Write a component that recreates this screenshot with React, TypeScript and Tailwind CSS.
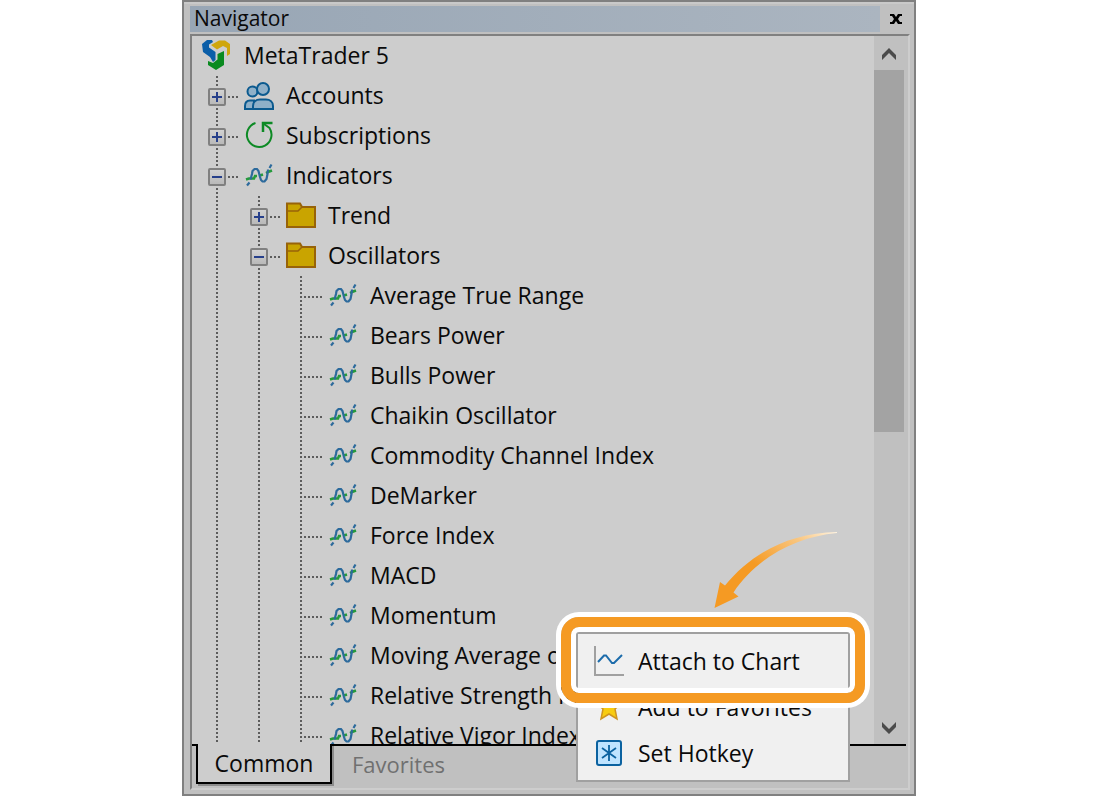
import React from "react";
import clsx from "clsx";

type IconName = "logo" | "accounts" | "subscriptions" | "indicator" | "folder";

interface TreeItem {
  label: string;
  icon: IconName;
  level: number;
  expanded?: boolean;
}

const oscillators = [
  "Average True Range",
  "Bears Power",
  "Bulls Power",
  "Chaikin Oscillator",
  "Commodity Channel Index",
  "DeMarker",
  "Force Index",
  "MACD",
  "Momentum",
  "Moving Average of Oscillator",
  "Relative Strength Index",
  "Relative Vigor Index",
];

const treeItems: TreeItem[] = [
  {label: "MetaTrader 5", icon: "logo", level: 0},
  {label: "Accounts", icon: "accounts", level: 1, expanded: false},
  {label: "Subscriptions", icon: "subscriptions", level: 1, expanded: false},
  {label: "Indicators", icon: "indicator", level: 1, expanded: true},
  {label: "Trend", icon: "folder", level: 2, expanded: false},
  {label: "Oscillators", icon: "folder", level: 2, expanded: true},
  ...oscillators.map((label): TreeItem => ({label, icon: "indicator", level: 3})),
];

function Icon({children}: {children: React.ReactNode}) {
  return (
    <svg width="30" height="32" viewBox="0 0 30 32" fill="none" className="shrink-0 overflow-visible" aria-hidden="true">
      {children}
    </svg>
  );
}

function LogoIcon() {
  return (
    <Icon>
      <path d="M0 4 5 0H10L11 2 7 4.500V7.500L13.500 12V20L11 22 8 17 1 12Z" fill="#0a5ea8"/>
      <path d="M9 5 17 0.500H23L28 4V14L25 16V8L21 6 15 9.500Z" fill="#cfa60c"/>
      <path d="M22 11V25L14 30 6 25V21L11 23 15.500 19.500V14Z" fill="#0a8a20"/>
    </Icon>
  );
}

function AccountsIcon() {
  return (
    <Icon>
      <g fill="#8fb0c8" stroke="#0b5a8f" strokeWidth="2">
        <path d="M1 29V26C1 22 3 20.500 6 20.500H10V29Z"/>
        <circle cx="8.500" cy="11.500" r="5"/>
        <path d="M9 29V26C9 22 12 19.500 16 19.500H22C26 19.500 29 22 29 26V29Z"/>
        <circle cx="19" cy="9" r="6"/>
      </g>
    </Icon>
  );
}

function SubscriptionsIcon() {
  return (
    <Icon>
      <path d="M11.500 3A12.300 12.300 0 1 0 25.500 8L20 4" stroke="#0d8a25" strokeWidth="2"/>
      <path d="M19 12V3H28.500" stroke="#0d8a25" strokeWidth="2.500"/>
    </Icon>
  );
}

function IndicatorIcon() {
  return (
    <Icon>
      <path d="M2 19.500 5 18.500H10L11 16H13M16 15.500 19 14.500M22 13 24 12 28 10.500" stroke="#259a3c" strokeWidth="2.500"/>
      <path d="M3 25.500 5.500 22.500M6.500 19.500 8 14 8.500 11 10.500 9H13L14.500 11 16 17 17 20 18.500 21.500H20.500L22.500 19 23.500 14 24 9.500M25.500 8 27.500 4.500" stroke="#2c6a9c" strokeWidth="2.200"/>
    </Icon>
  );
}

function FolderIcon() {
  return (
    <Icon>
      <path d="M1 3.500H14L16 7H29V27H1Z" fill="#c9a400" stroke="#986309" strokeWidth="2"/>
      <path d="M1 11H12L16 7" stroke="#986309" strokeWidth="1.500"/>
    </Icon>
  );
}

const icons: Record<IconName, React.FC> = {
  logo: LogoIcon,
  accounts: AccountsIcon,
  subscriptions: SubscriptionsIcon,
  indicator: IndicatorIcon,
  folder: FolderIcon,
};

function Expander({expanded, label}: {expanded: boolean, label: string}) {
  return (
    <button
      type="button"
      aria-label={`${expanded ? "Collapse" : "Expand"} ${label}`}
      className="col-start-1 row-start-1 flex size-[18px] items-center justify-center rounded-[2px] border-2 border-[#808080] bg-linear-to-b from-[#d2d2d2] to-[#b9b9b9]"
    >
      <svg width="10" height="10" viewBox="0 0 10 10" stroke="#27408b" strokeWidth="2" aria-hidden="true">
        <path d={expanded ? "M0 5H10" : "M0 5H10M5 0V10"}/>
      </svg>
    </button>
  );
}

function Guide({item, last}: {item: TreeItem, last: boolean}) {
  return (
    <div className="grid h-10 w-[42px] shrink-0 items-center justify-items-center bg-[repeating-linear-gradient(to_bottom,#5c5c5c_0_2px,transparent_2px_4px)] bg-[length:2px_100%] bg-center bg-no-repeat pt-0.5">
      {last && (
        <span
          className={clsx(
            "col-start-1 row-start-1 h-0.5 justify-self-end bg-[repeating-linear-gradient(to_right,#5c5c5c_0_2px,transparent_2px_4px)]",
            item.expanded === undefined ? "w-[18px]" : "w-[10px]"
          )}
        />
      )}
      {last && item.expanded !== undefined && <Expander expanded={item.expanded} label={item.label}/>}
    </div>
  );
}

function TreeRow({item}: {item: TreeItem}) {
  const ItemIcon = icons[item.icon];

  return (
    <li role="treeitem" aria-level={item.level + 1} aria-expanded={item.expanded} className="flex h-10 items-center">
      {Array.from({length: item.level}, (_, index) => (
        <Guide key={`guide-${index}`} item={item} last={index === item.level - 1}/>
      ))}
      <div className="flex items-center gap-3 pl-1.5">
        <ItemIcon/>
        <span className="pb-0.5 whitespace-nowrap">{item.label}</span>
      </div>
    </li>
  );
}

function Chevron({down}: {down?: boolean}) {
  return (
    <svg width="14" height="12" viewBox="0 0 14 12" fill="#4b4b4b" aria-hidden="true">
      <path d={down ? "M0 0 7 7 14 0V5L7 12 0 5Z" : "M0 12 7 5 14 12V7L7 0 0 7Z"}/>
    </svg>
  );
}

function ScrollBar() {
  return (
    <div className="mr-1 flex w-[30px] shrink-0 flex-col bg-[#c0c0c0]">
      <button type="button" aria-label="Scroll up" className="flex h-[34px] items-center justify-center pt-0.5"><Chevron/></button>
      <div className="min-h-0 flex-1">
        <div className="h-[362px] max-h-full bg-[#a3a3a3]"/>
      </div>
      <button type="button" aria-label="Scroll down" className="flex h-[34px] items-center justify-center pt-0.5"><Chevron down/></button>
    </div>
  );
}

function MenuItem({label, children}: {label: string, children: React.ReactNode}) {
  return (
    <button type="button" role="menuitem" className="flex h-[46px] w-full items-center gap-3.5 pl-4 text-left">
      <Icon>{children}</Icon>
      <span className="pb-0.5 whitespace-nowrap">{label}</span>
    </button>
  );
}

function ContextMenu() {
  return (
    <div className="absolute right-16 bottom-3 w-[274px]">
      <div role="menu" className="border-2 border-[#a0a0a0] bg-[#f0f0f0] pt-[5px] pb-[3px]">
        <MenuItem label="Attach to Chart">
          <path d="M1 0V29H30" stroke="#a0a0a0" strokeWidth="2"/>
          <path d="M4 16 10 9.500H12L18 17H20L28 9" stroke="#1c6cab" strokeWidth="2"/>
        </MenuItem>
        <MenuItem label="Add to Favorites">
          <path d="M15 0 18.500 10H29L21 17 23 27 15 22 7 27 9 17 1 10H11.500Z" fill="#f8cc10" stroke="#cf9420" strokeWidth="1.500"/>
        </MenuItem>
        <MenuItem label="Set Hotkey">
          <rect x="3" y="3" width="24" height="24" rx="2" fill="#bfe4ff" stroke="#0b62a0" strokeWidth="2"/>
          <path d="M15 7V23M8 10 22 20M22 10 8 20" stroke="#0b62a0" strokeWidth="1.800"/>
        </MenuItem>
      </div>
      <div className="pointer-events-none absolute -inset-x-[15px] -top-[15px] h-[86px] rounded-[18px] border-[10px] border-[#f59a23] ring-[5px] ring-white inset-ring-[5px] inset-ring-white"/>
      <svg width="126" height="78" viewBox="0 0 126 78" className="pointer-events-none absolute -top-[101px] left-[138px]" aria-hidden="true">
        <defs>
          <linearGradient id="arrow-fade" x1="0.1" y1="0.800" x2="1" y2="0">
            <stop offset="0.350" stopColor="#f59a23"/>
            <stop offset="0.750" stopColor="#f9c680"/>
            <stop offset="1" stopColor="#fff3e0"/>
          </linearGradient>
        </defs>
        <path d="M0.500 77 6 51 11 54.500C38 22 75 2 123 1V2C80 6 42 28 19.500 61.500L24.500 65.500Z" fill="url(#arrow-fade)"/>
      </svg>
    </div>
  );
}

function Tabs() {
  return (
    <div role="tablist" className="flex h-11 shrink-0 items-start pr-0.5">
      <div className="w-1 border-t-2 border-black"/>
      <button
        type="button"
        role="tab"
        aria-selected="true"
        className="h-10 w-[136px] border-x-2 border-b-2 border-black bg-[#cdcdcd] text-center whitespace-nowrap shadow-[2px_2px_0_#8c8c8c]"
      >
        Common
      </button>
      <div className="flex flex-1 border-t-2 border-black">
        <button type="button" role="tab" aria-selected="false" className="h-9 px-5 text-[22px] text-[#707070]">Favorites</button>
      </div>
    </div>
  );
}

export default function App() {
  return (
    <main className="flex h-screen justify-center bg-white pr-0.5 font-['Open_Sans','Noto_Sans',sans-serif] text-[23px] leading-8 text-[#0a0a0a]">
      <section
        aria-label="Navigator"
        className="relative flex w-full max-w-[734px] flex-col border-2 border-[#808080] bg-[#c0c0c0] pt-1 pr-1 pb-1 pl-1.5 inset-shadow-[0_2px_0_#c9c9c9]"
      >
        <header className="flex h-[26px] shrink-0 items-center">
          <h1 className="h-full flex-1 bg-linear-to-r from-[#98a6b5] to-[#abb5c0] pl-1 text-[21px] leading-[25px]">Navigator</h1>
          <button type="button" aria-label="Close" className="flex w-[30px] items-center justify-center pl-0.5">
            <svg width="12" height="10" viewBox="0 0 12 10" aria-hidden="true">
              <path d="M0 0H4L6 3 8 0H12V2H10L8 5 10 8H12V10H8L6 7 4 10H0V8H2L4 5 2 2H0Z"/>
            </svg>
          </button>
        </header>
        <div className="mt-0.5 flex min-h-0 flex-1 flex-col border-2 border-t-[#808080] border-r-[#cdcdcd] border-b-[#cdcdcd] border-l-[#808080]">
          <div className="flex min-h-0 flex-1">
            <ul role="tree" className="min-w-0 flex-1 overflow-hidden bg-[#cdcdcd] pl-1">
              {treeItems.map((item) => (
                <TreeRow key={item.label} item={item}/>
              ))}
            </ul>
            <ScrollBar/>
          </div>
          <Tabs/>
        </div>
        <ContextMenu/>
      </section>
    </main>
  );
}
